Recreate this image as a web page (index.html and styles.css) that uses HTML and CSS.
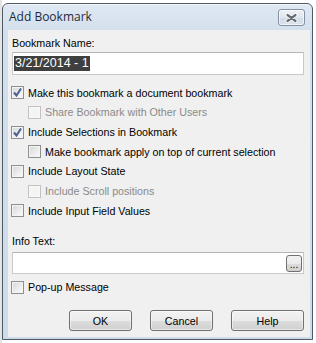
FILE: index.html
```html
<!DOCTYPE html>
<html lang="en">
<head>
    <meta charset="UTF-8">
    <title>Add Bookmark</title>
    <link rel="stylesheet" href="styles.css">
</head>
<body>

    <div class="window">
        <div class="titlebar">
            <span class="title">Add Bookmark</span>
            <button class="close-button" title="Close">
                <svg width="13" height="10" viewBox="0 0 13 10">
                    <path d="M2.5 2 L10.5 8 M10.5 2 L2.5 8" stroke="#ffffff" stroke-width="4" stroke-linecap="round"/>
                    <path d="M2.5 2 L10.5 8 M10.5 2 L2.5 8" stroke="#676c74" stroke-width="2.2" stroke-linecap="round"/>
                </svg>
            </button>
        </div>

        <div class="client">
            <div class="field-label">Bookmark Name:</div>
            <div class="textbox"><span class="selected">3/21/2014 - 1</span></div>

            <!-- Opzioni del bookmark -->
            <ul class="options">
                <li class="option"><span class="check checked"></span>Make this bookmark a document bookmark</li>
                <li class="option sub disabled"><span class="check"></span>Share Bookmark with Other Users</li>
                <li class="option"><span class="check checked"></span>Include Selections in Bookmark</li>
                <li class="option sub"><span class="check"></span>Make bookmark apply on top of current selection</li>
                <li class="option"><span class="check"></span>Include Layout State</li>
                <li class="option sub disabled"><span class="check"></span>Include Scroll positions</li>
                <li class="option"><span class="check"></span>Include Input Field Values</li>
            </ul>

            <div class="field-label info-label">Info Text:</div>
            <div class="textbox info-box">
                <button class="browse-button">...</button>
            </div>

            <div class="option popup"><span class="check"></span>Pop-up Message</div>

            <div class="actions">
                <button class="dialog-button">OK</button>
                <button class="dialog-button">Cancel</button>
                <button class="dialog-button help">Help</button>
            </div>
        </div>
    </div>

</body>
</html>
```

FILE: styles.css
```css
body {
    margin: 0;
    background: linear-gradient(to right, #e4e4e4 0, #e4e4e4 2px, #ffffff 2px);
    font-family: 'Liberation Sans', Arial, sans-serif;
    font-size: 10.7px;
    color: #000;
}
.window {
    box-sizing: border-box;
    width: 311px;
    height: 337px;
    margin: 3px 0 0 2px;
    border: 1px solid #4f5966;
    border-radius: 6px 6px 0 0;
    background: linear-gradient(to bottom, #dfe8f3 0, #d3dfec 30px, #cfdbe9 100%);
    box-shadow: inset 0 1px 0 rgba(255, 255, 255, 0.7);
}
.titlebar {
    height: 26px;
    display: flex;
    align-items: flex-start;
    justify-content: space-between;
    padding: 0 7px 0 6px;
}
.title {
    font-family: 'Open Sans', sans-serif;
    font-size: 12px;
    line-height: 14px;
    margin-top: 6px;
    color: #1e2b3a;
}
.close-button {
    width: 27px;
    height: 17px;
    margin-top: 5px;
    padding: 0;
    border: 1px solid #8592a3;
    border-radius: 3px;
    background: linear-gradient(to bottom, #eef2f7 0, #dfe6ee 50%, #d3dce7 51%, #dae2ec 100%);
    box-shadow: inset 0 0 0 1px rgba(255, 255, 255, 0.6);
    display: flex;
    align-items: center;
    justify-content: center;
}
.client {
    height: 307px;
    margin: 0 2px 0 5px;
    padding: 7px 6px 0 4px;
    box-sizing: border-box;
    background-color: #f0f0f0;
}
.field-label {
    line-height: 13px;
}
.textbox {
    box-sizing: border-box;
    height: 23px;
    margin-top: 2px;
    border: 1px solid #c9c9c9;
    border-top-color: #b5b5b5;
    background-color: #ffffff;
    padding: 3px 0 0 1px;
}
.selected {
    display: inline-block;
    background-color: #3f3f3f;
    color: #ffffff;
    font-size: 12.5px;
    line-height: 15px;
    padding: 0 1px;
}
.options {
    list-style-type: none;
    margin: 8px 0 0 0;
    padding: 0;
}
.option {
    display: flex;
    align-items: center;
    height: 19.67px;
    margin-left: -1px;
}
.option.sub {
    padding-left: 17px;
}
.option.disabled {
    color: #8a8a8a;
}
.check {
    box-sizing: border-box;
    width: 13px;
    height: 13px;
    margin-right: 4px;
    border: 1px solid #8e8f8f;
    background: linear-gradient(135deg, #d6d6d6 0, #ececec 55%, #fbfbfb 100%);
    box-shadow: inset 0 0 0 1px #f4f4f4;
    flex-shrink: 0;
}
.option.disabled .check {
    border-color: #c2c2c2;
    background: #f4f4f4;
    box-shadow: inset 0 0 0 1px #f8f8f8;
}
.check.checked {
    background:
        url("data:image/svg+xml;utf8,<svg xmlns='http://www.w3.org/2000/svg' width='11' height='11'><path d='M2 5.5 L4.5 8.5 L9 1.5' fill='none' stroke='%234b5f95' stroke-width='2'/></svg>") center / 11px 11px no-repeat,
        linear-gradient(135deg, #d6d6d6 0, #ececec 55%, #fbfbfb 100%);
}
.info-label {
    margin-top: 14px;
}
.info-box {
    height: 22px;
    margin-top: 4px;
    padding: 2px 1px 0 0;
    display: flex;
    justify-content: flex-end;
}
.browse-button {
    box-sizing: border-box;
    width: 16px;
    height: 17px;
    padding: 0;
    border: 1px solid #707070;
    border-radius: 3px;
    background: linear-gradient(to bottom, #f2f2f2 0, #ebebeb 50%, #dddddd 51%, #cfcfcf 100%);
    font-family: 'Liberation Sans', Arial, sans-serif;
    font-size: 10px;
    line-height: 17px;
    color: #000;
}
.popup {
    margin-top: 4px;
}
.actions {
    display: flex;
    justify-content: flex-end;
    gap: 18px;
    margin-top: 13px;
}
.dialog-button {
    box-sizing: border-box;
    width: 63px;
    height: 21px;
    padding: 0;
    border: 1px solid #707070;
    border-radius: 3px;
    background: linear-gradient(to bottom, #f2f2f2 0, #ebebeb 50%, #dddddd 51%, #cfcfcf 100%);
    box-shadow: inset 0 0 0 1px rgba(255, 255, 255, 0.5);
    font-family: 'Liberation Sans', Arial, sans-serif;
    font-size: 10.7px;
    color: #000;
}
.dialog-button.help {
    width: 73px;
}
```
